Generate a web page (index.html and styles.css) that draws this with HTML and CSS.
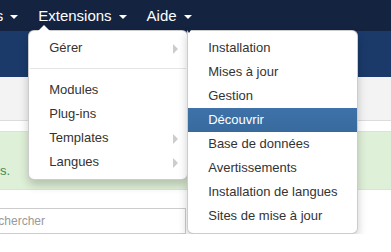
FILE: index.html
```html
<!DOCTYPE html>
<html lang="fr">
<head>
    <meta charset="UTF-8">
    <meta name="viewport" content="width=device-width, initial-scale=1.0">
    <title>Extensions</title>
    <link rel="stylesheet" href="styles.css">
</head>
<body>
    <nav class="navbar">
        <ul class="nav">
            <li class="nav-item"><a href="#">Composants<span class="caret"></span></a></li>
            <li class="nav-item open">
                <a href="#">Extensions<span class="caret"></span></a>
                <ul class="dropdown-menu">
                    <li class="dropdown-submenu">
                        <a href="#">Gérer</a>
                        <ul class="dropdown-menu sub-menu">
                            <li><a href="#">Installation</a></li>
                            <li><a href="#">Mises à jour</a></li>
                            <li><a href="#">Gestion</a></li>
                            <li class="active"><a href="#">Découvrir</a></li>
                            <li><a href="#">Base de données</a></li>
                            <li><a href="#">Avertissements</a></li>
                            <li><a href="#">Installation de langues</a></li>
                            <li><a href="#">Sites de mise à jour</a></li>
                        </ul>
                    </li>
                    <li class="divider"></li>
                    <li><a href="#">Modules</a></li>
                    <li><a href="#">Plug-ins</a></li>
                    <li class="dropdown-submenu"><a href="#">Templates</a></li>
                    <li class="dropdown-submenu"><a href="#">Langues</a></li>
                </ul>
            </li>
            <li class="nav-item"><a href="#">Aide<span class="caret"></span></a></li>
        </ul>
    </nav>

    <header class="header"></header>
    <div class="subhead"></div>

    <div class="alert">s.</div>

    <div class="filter-bar">
        <input type="text" class="search" placeholder="Rechercher">
        <button class="btn btn-search"></button>
        <button class="btn btn-clear"></button>
    </div>
</body>
</html>
```

FILE: styles.css
```css
body {
    margin: 0;
    font-family: "Liberation Sans", Arial, sans-serif;
    font-size: 13px;
    color: #333;
    background-color: #fff;
    overflow: hidden;
}
ul {
    list-style: none;
    margin: 0;
    padding: 0;
}
a {
    text-decoration: none;
}
.navbar {
    height: 31px;
    background-color: #14233f;
    position: relative;
    z-index: 10;
}
.nav {
    display: flex;
    margin-left: -91px;
}
.nav-item {
    position: relative;
}
.nav-item > a {
    display: block;
    padding: 0 10px;
    line-height: 31px;
    font-size: 15px;
    color: #fff;
}
.caret {
    display: inline-block;
    width: 0;
    height: 0;
    margin-left: 7px;
    vertical-align: middle;
    border-top: 4px solid #fff;
    border-left: 4px solid transparent;
    border-right: 4px solid transparent;
}
.dropdown-menu {
    position: absolute;
    top: 100%;
    left: 0;
    margin-top: -1px;
    width: 160px;
    box-sizing: border-box;
    padding: 5px 0;
    background-color: #fff;
    border: 1px solid rgba(0, 0, 0, 0.2);
    border-radius: 6px;
    box-shadow: 0 5px 10px rgba(0, 0, 0, 0.2);
}
.nav-item > .dropdown-menu::after {
    content: "";
    position: absolute;
    top: -6px;
    left: 9px;
    border-left: 6px solid transparent;
    border-right: 6px solid transparent;
    border-bottom: 6px solid #fff;
}
.dropdown-menu li > a {
    display: block;
    padding: 2px 20px;
    line-height: 20px;
    color: #333;
    white-space: nowrap;
}
.dropdown-menu .active > a {
    color: #fff;
    background: linear-gradient(#3e72a8, #386a9e);
}
.divider {
    height: 1px;
    margin: 8px 1px;
    background-color: #e5e5e5;
    border-bottom: 1px solid #fff;
}
.dropdown-submenu {
    position: relative;
}
.dropdown-submenu > a::after {
    content: "";
    float: right;
    width: 0;
    height: 0;
    margin-top: 6px;
    margin-right: -11px;
    border-top: 5px solid transparent;
    border-bottom: 5px solid transparent;
    border-left: 5px solid #ccc;
}
.sub-menu {
    top: 0;
    left: 100%;
    margin-top: -6px;
    width: 171px;
    border-radius: 0 6px 6px 6px;
}
.sub-menu::before {
    content: "";
    position: absolute;
    top: -1px;
    left: -1px;
    border-top: 3px solid #1b2a45;
    border-left: 2px solid transparent;
    border-right: 2px solid transparent;
}
.header {
    height: 46px;
    background-color: #1b3a6a;
}
.subhead {
    height: 43px;
    background-color: #f3f3f3;
    border-bottom: 1px solid #dcdcdc;
}
.alert {
    margin-top: 10px;
    padding: 30px 0 9px;
    line-height: 18px;
    color: #468847;
    background-color: #dff0d8;
    border-top: 1px solid #d6e9c6;
    border-bottom: 1px solid #d6e9c6;
}
.filter-bar {
    display: flex;
    margin-top: 18px;
}
.search {
    margin: 0 0 0 -24px;
    width: 210px;
    height: 26px;
    box-sizing: border-box;
    padding: 4px 6px;
    font-family: "Liberation Sans", Arial, sans-serif;
    font-size: 12px;
    border: 1px solid #ccc;
    border-radius: 0;
    outline: none;
}
.search::placeholder {
    color: #999;
}
.btn {
    height: 26px;
    margin-left: 4px;
    background-color: #f5f5f5;
    border: 1px solid #ccc;
    border-radius: 4px;
}
.btn-search {
    width: 43px;
}
.btn-clear {
    width: 65px;
    margin-left: 10px;
}
```
